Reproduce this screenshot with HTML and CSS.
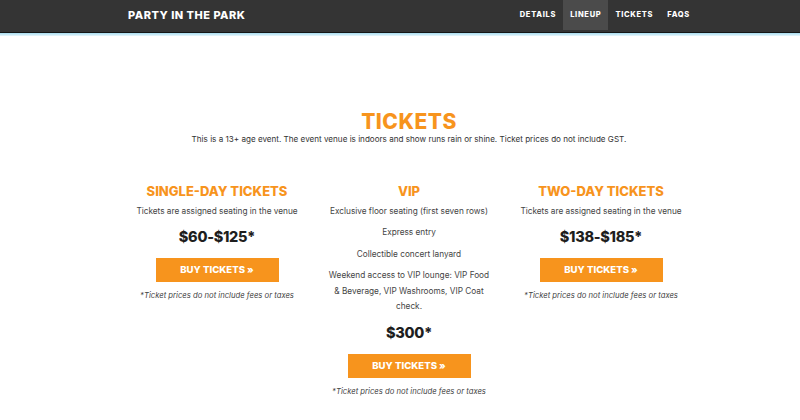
FILE: index.html
```html
<!DOCTYPE html>
<html>
<head>
<meta charset="utf-8">
<link rel="stylesheet" href="styles.css">
</head>
<body>
<header class="navbar">
  <div class="nav-inner">
    <a class="brand">PARTY IN THE PARK</a>
    <nav class="menu">
      <a>DETAILS</a>
      <a class="active">LINEUP</a>
      <a>TICKETS</a>
      <a>FAQS</a>
    </nav>
  </div>
</header>
<div class="strip"></div>
<main class="page">
  <section class="section">
    <h1 class="title">TICKETS</h1>
    <p class="lead">This is a 13+ age event. The event venue is indoors and show runs rain or shine. Ticket prices do not include GST.</p>
    <div class="cols">
      <div class="col">
        <h2>SINGLE-DAY TICKETS</h2>
        <p class="item">Tickets are assigned seating in the venue</p>
        <div class="price">$60-$125*</div>
        <a class="btn">BUY TICKETS »</a>
        <p class="note">*Ticket prices do not include fees or taxes</p>
      </div>
      <div class="col">
        <h2>VIP</h2>
        <p class="item">Exclusive floor seating (first seven rows)</p>
        <p class="item">Express entry</p>
        <p class="item">Collectible concert lanyard</p>
        <p class="item">Weekend access to VIP lounge: VIP Food &amp; Beverage, VIP Washrooms, VIP Coat check.</p>
        <div class="price">$300*</div>
        <a class="btn">BUY TICKETS »</a>
        <p class="note">*Ticket prices do not include fees or taxes</p>
      </div>
      <div class="col">
        <h2>TWO-DAY TICKETS</h2>
        <p class="item">Tickets are assigned seating in the venue</p>
        <div class="price">$138-$185*</div>
        <a class="btn">BUY TICKETS »</a>
        <p class="note">*Ticket prices do not include fees or taxes</p>
      </div>
    </div>
  </section>
</main>
</body>
</html>
```
FILE: styles.css
```css
* { box-sizing: border-box; }
body {
  margin: 0;
  background: #fff;
  font-family: "Inter", "Open Sans", sans-serif;
  color: #444;
}
.navbar {
  background: #343434;
  height: 33px;
  border-bottom: 1px solid #161616;
  padding-left: 18px;
}
.nav-inner {
  width: 576px;
  margin: 0 auto;
  display: flex;
  justify-content: space-between;
  align-items: flex-start;
  height: 100%;
}
.brand {
  color: #fff;
  font-weight: 800;
  font-size: 11px;
  letter-spacing: 0.5px;
  line-height: 31px;
  padding-left: 7px;
}
.menu {
  display: flex;
  height: 30px;
}
.menu a {
  color: #fff;
  font-weight: 800;
  font-size: 7.5px;
  letter-spacing: 0.7px;
  line-height: 30px;
  padding: 0 7px 0 7px;
}
.menu a.active { background: #4b4b4b; }
.strip {
  height: 3px;
  background: linear-gradient(#a6dcf0, #e8f6fb);
}
.page {
  padding-left: 18px;
}
.section {
  width: 576px;
  margin: 0 auto;
  padding-top: 74px;
  text-align: center;
}
.title {
  margin: 0;
  color: #f7941d;
  font-size: 21px;
  font-weight: 800;
  letter-spacing: 0.5px;
  line-height: 23px;
}
.lead {
  margin: 0 -20px;
  font-size: 8.1px;
  line-height: 12px;
  color: #333;
}
.cols {
  display: grid;
  grid-template-columns: 1fr 1fr 1fr;
  margin-top: 37px;
}
.col {
  display: flex;
  flex-direction: column;
  align-items: center;
  padding: 0 13px;
}
.col h2 {
  margin: 0;
  color: #f7941d;
  font-size: 13px;
  font-weight: 800;
  line-height: 18px;
}
.item {
  margin: 3.6px 0 0;
  font-size: 8.25px;
  line-height: 15.5px;
}
.item + .item { margin-top: 6px; }
.price {
  margin-top: 8px;
  font-size: 14.5px;
  font-weight: 800;
  letter-spacing: -0.3px;
  color: #1e1e1e;
  line-height: 20px;
}
.btn {
  margin-top: 11px;
  width: 123px;
  height: 24px;
  background: #f7941d;
  color: #fff;
  font-size: 9.6px;
  font-weight: 800;
  line-height: 24px;
}
.note {
  margin: 8px 0 0;
  font-size: 7.7px;
  font-style: italic;
  line-height: 12px;
}
```
